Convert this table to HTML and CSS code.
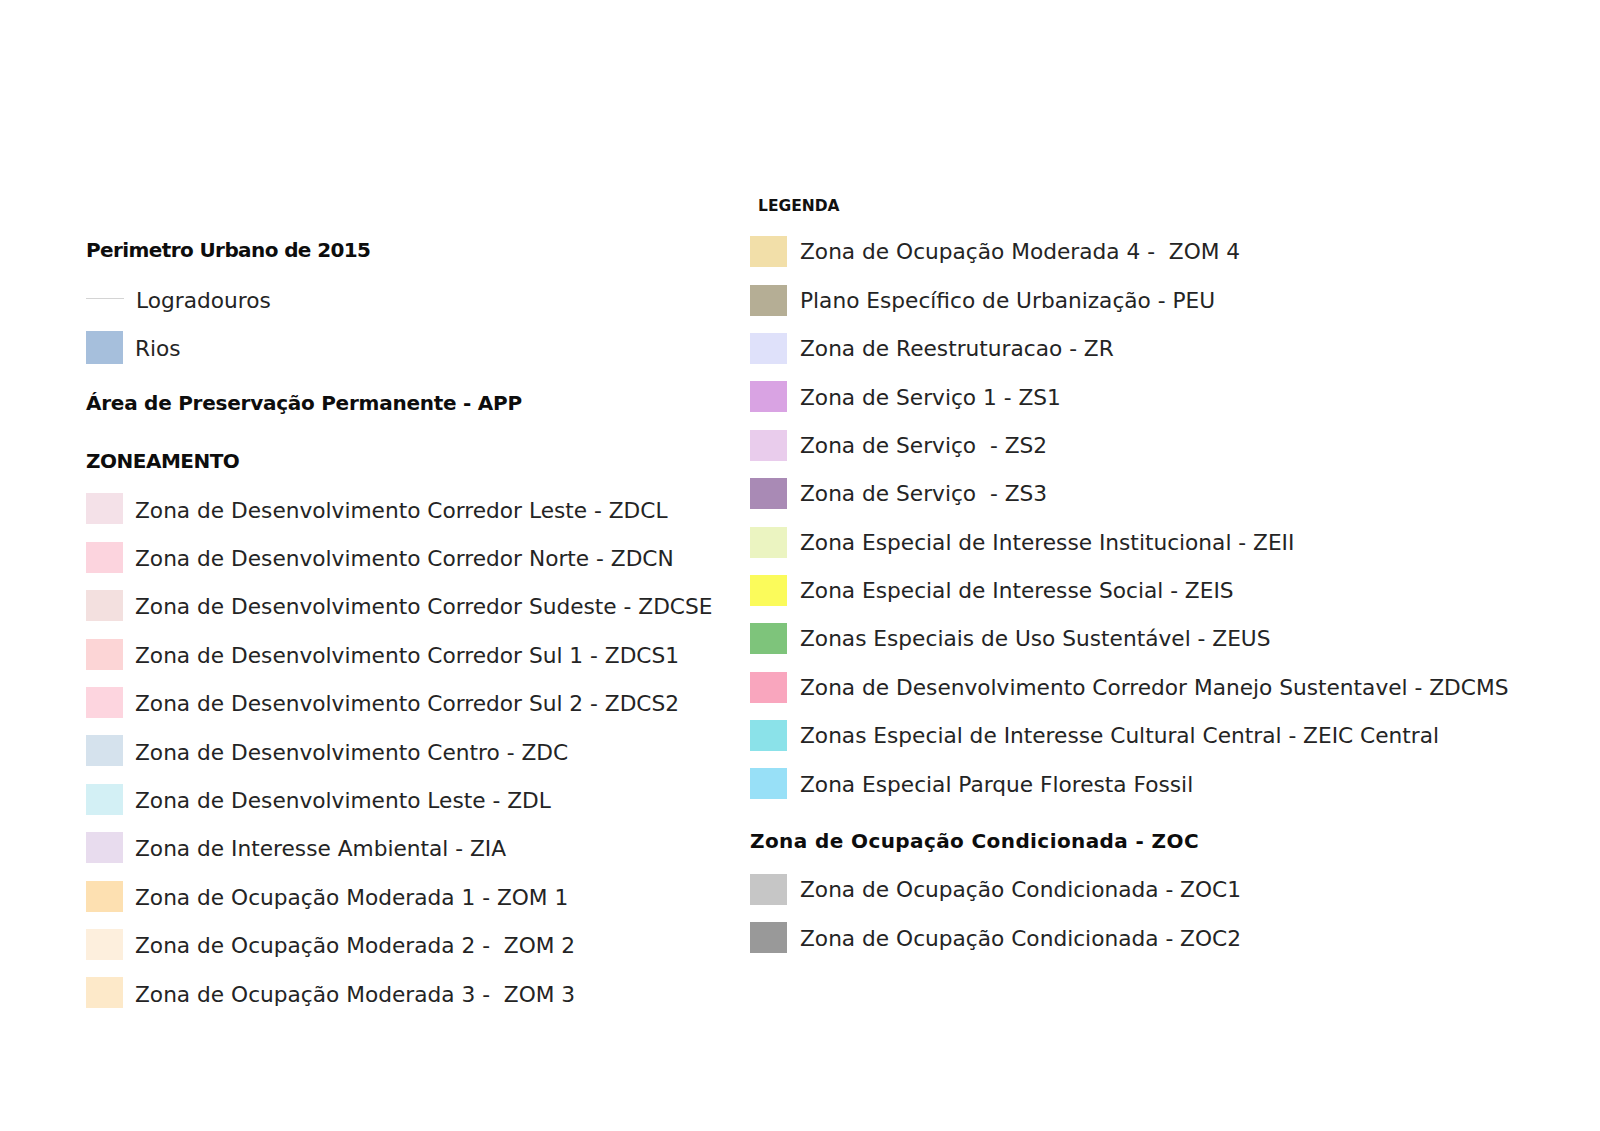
FILE: index.html
```html
<!DOCTYPE html>
<html lang="pt-BR">
<head>
<meta charset="utf-8">
<title>Legenda - Zoneamento</title>
<link rel="stylesheet" href="styles.css">
</head>
<body>
<main class="legend">
  <section class="col col-left">
    <h2 class="head head-per">Perimetro Urbano de 2015</h2>
    <div class="row"><span class="line"></span><span class="label">Logradouros</span></div>
    <div class="row"><span class="sw sw-tall c-rios"></span><span class="label">Rios</span></div>
    <h2 class="head head-app">Área de Preservação Permanente - APP</h2>
    <h2 class="head head-zon">ZONEAMENTO</h2>
    <div class="row"><span class="sw c-zdcl"></span><span class="label">Zona de Desenvolvimento Corredor Leste - ZDCL</span></div>
    <div class="row"><span class="sw c-zdcn"></span><span class="label">Zona de Desenvolvimento Corredor Norte - ZDCN</span></div>
    <div class="row"><span class="sw c-zdcse"></span><span class="label">Zona de Desenvolvimento Corredor Sudeste - ZDCSE</span></div>
    <div class="row"><span class="sw c-zdcs1"></span><span class="label">Zona de Desenvolvimento Corredor Sul 1 - ZDCS1</span></div>
    <div class="row"><span class="sw c-zdcs2"></span><span class="label">Zona de Desenvolvimento Corredor Sul 2 - ZDCS2</span></div>
    <div class="row"><span class="sw c-zdc"></span><span class="label">Zona de Desenvolvimento Centro - ZDC</span></div>
    <div class="row"><span class="sw c-zdl"></span><span class="label">Zona de Desenvolvimento Leste - ZDL</span></div>
    <div class="row"><span class="sw c-zia"></span><span class="label">Zona de Interesse Ambiental - ZIA</span></div>
    <div class="row"><span class="sw c-zom1"></span><span class="label">Zona de Ocupação Moderada 1 - ZOM 1</span></div>
    <div class="row"><span class="sw c-zom2"></span><span class="label">Zona de Ocupação Moderada 2 -  ZOM 2</span></div>
    <div class="row"><span class="sw c-zom3"></span><span class="label">Zona de Ocupação Moderada 3 -  ZOM 3</span></div>
  </section>
  <section class="col col-right">
    <h3 class="title">LEGENDA</h3>
    <div class="row"><span class="sw c-zom4"></span><span class="label">Zona de Ocupação Moderada 4 -  ZOM 4</span></div>
    <div class="row"><span class="sw c-peu"></span><span class="label">Plano Específico de Urbanização - PEU</span></div>
    <div class="row"><span class="sw c-zr"></span><span class="label">Zona de Reestruturacao - ZR</span></div>
    <div class="row"><span class="sw c-zs1"></span><span class="label">Zona de Serviço 1 - ZS1</span></div>
    <div class="row"><span class="sw c-zs2"></span><span class="label">Zona de Serviço  - ZS2</span></div>
    <div class="row"><span class="sw c-zs3"></span><span class="label">Zona de Serviço  - ZS3</span></div>
    <div class="row"><span class="sw c-zeii"></span><span class="label">Zona Especial de Interesse Institucional - ZEII</span></div>
    <div class="row"><span class="sw c-zeis"></span><span class="label">Zona Especial de Interesse Social - ZEIS</span></div>
    <div class="row"><span class="sw c-zeus"></span><span class="label">Zonas Especiais de Uso Sustentável - ZEUS</span></div>
    <div class="row"><span class="sw c-zdcms"></span><span class="label">Zona de Desenvolvimento Corredor Manejo Sustentavel - ZDCMS</span></div>
    <div class="row"><span class="sw c-zeic"></span><span class="label">Zonas Especial de Interesse Cultural Central - ZEIC Central</span></div>
    <div class="row"><span class="sw c-parque"></span><span class="label">Zona Especial Parque Floresta Fossil</span></div>
    <h2 class="head head-zoc">Zona de Ocupação Condicionada - ZOC</h2>
    <div class="row"><span class="sw c-zoc1"></span><span class="label">Zona de Ocupação Condicionada - ZOC1</span></div>
    <div class="row"><span class="sw c-zoc2"></span><span class="label">Zona de Ocupação Condicionada - ZOC2</span></div>
  </section>
</main>
</body>
</html>
```

FILE: styles.css
```css
html, body {
  margin: 0;
  padding: 0;
  background: #ffffff;
}

body {
  font-family: "DejaVu Sans", "Liberation Sans", sans-serif;
  color: #242424;
  width: 1600px;
  height: 1131px;
  overflow: hidden;
}

.legend {
  display: flex;
  align-items: flex-start;
  padding: 185.5px 0 0 86px;
}

.col {
  display: flex;
  flex-direction: column;
}

.col-left {
  width: 664px;
  flex: none;
  padding-top: 40.8px;
}

.col-right {
  flex: 1;
}

.row {
  display: flex;
  align-items: center;
  height: 48.4px;
}

.sw {
  flex: none;
  width: 37px;
  height: 31px;
}

.sw-tall {
  height: 33px;
}

.line {
  flex: none;
  width: 38px;
  height: 1px;
  background: #d4d4d4;
  margin-top: 0;
}

.label {
  margin-left: 12px;
  margin-top: 3px;
  font-size: 21.7px;
  line-height: 1;
  white-space: pre;
}

.col-right .label {
  margin-left: 13px;
  margin-top: 1px;
}

.head {
  margin: 0;
  height: 48.4px;
  display: flex;
  align-items: center;
  font-size: 20px;
  font-weight: bold;
  line-height: 1;
  color: #0d0d0d;
  white-space: pre;
}

.head-per {
  letter-spacing: -0.6px;
}

.head-app {
  margin-top: 7.5px;
  letter-spacing: -0.25px;
}

.head-zon {
  margin-top: 9px;
  letter-spacing: -0.5px;
}

.head-zoc {
  margin-top: 8.7px;
  letter-spacing: 0.4px;
}

.title {
  margin: 0;
  height: 42px;
  display: flex;
  align-items: center;
  padding-left: 8px;
  font-size: 15.5px;
  font-weight: bold;
  line-height: 1;
  color: #111111;
}

/* swatch colours */
.c-rios { background: #a6bfdc; }
.c-zdcl { background: #f4e1e8; }
.c-zdcn { background: #fcd4de; }
.c-zdcse { background: #f3e0df; }
.c-zdcs1 { background: #fcd5d6; }
.c-zdcs2 { background: #fdd5df; }
.c-zdc { background: #d5e2ed; }
.c-zdl { background: #d3f0f5; }
.c-zia { background: #e8dcee; }
.c-zom1 { background: #fde0b1; }
.c-zom2 { background: #fdefdd; }
.c-zom3 { background: #fde9c9; }
.c-zom4 { background: #f2dfa9; }
.c-peu { background: #b5ae95; }
.c-zr { background: #dfe1fa; }
.c-zs1 { background: #d9a3e3; }
.c-zs2 { background: #e9ccec; }
.c-zs3 { background: #a98ab5; }
.c-zeii { background: #ebf4c1; }
.c-zeis { background: #fbfb5b; }
.c-zeus { background: #7ec47b; }
.c-zdcms { background: #f9a6be; }
.c-zeic { background: #8be2e9; }
.c-parque { background: #98e0f7; }
.c-zoc1 { background: #c6c6c6; }
.c-zoc2 { background: #999999; }
```
